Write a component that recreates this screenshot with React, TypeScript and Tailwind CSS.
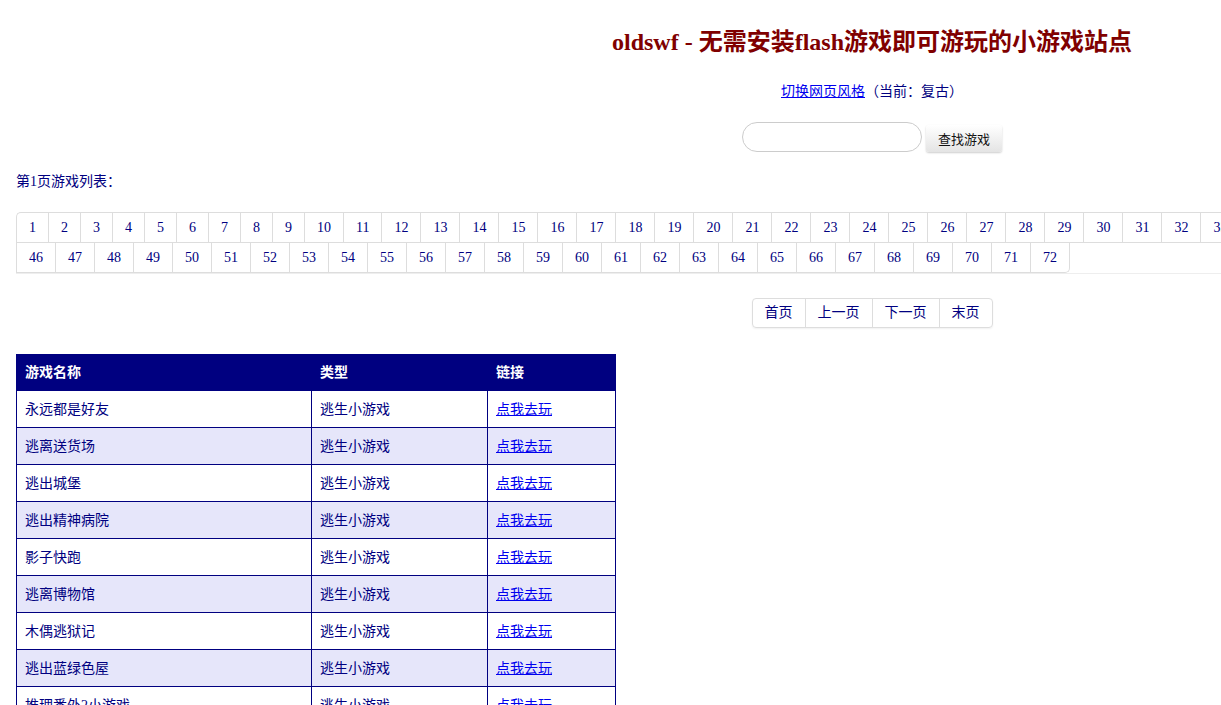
import React from 'react';

const games = [
  '永远都是好友',
  '逃离送货场',
  '逃出城堡',
  '逃出精神病院',
  '影子快跑',
  '逃离博物馆',
  '木偶逃狱记',
  '逃出蓝绿色屋',
  '推理番外2小游戏',
  '逃出密室',
];

const pages = Array.from({ length: 72 }, (_, i) => i + 1);

const App: React.FC = () => {
  return (
    <div
      className="w-full overflow-hidden bg-white text-[#000080] text-[14px]"
      style={{ fontFamily: '"Liberation Serif", "Noto Sans CJK SC", serif' }}
    >
      <div className="ml-4 w-[1712px] pb-10">
        {/* Header */}
        <h1 className="pt-[26px] text-center text-[24px] leading-8 font-bold text-[#800000]">
          oldswf - 无需安装flash游戏即可游玩的小游戏站点
        </h1>
        <p className="mt-[24px] text-center leading-5">
          <a href="#" className="text-[#0000ee] underline">切换网页风格</a>（当前：复古）
        </p>

        {/* Search */}
        <div className="mt-[20px] flex justify-center items-end gap-1">
          <input
            type="text"
            className="h-[30px] w-[180px] rounded-full border border-[#cccccc] bg-white px-3 outline-none"
          />
          <button
            className="h-[27px] w-[76px] rounded-[3px] bg-gradient-to-b from-white to-[#e4e4e4] text-[13px] text-[#111] shadow-[0_1px_2px_rgba(0,0,0,0.2)]"
            style={{ fontFamily: '"Noto Sans CJK SC", sans-serif' }}
          >
            查找游戏
          </button>
        </div>

        <p className="mt-[20px] leading-5">第1页游戏列表：</p>

        {/* Page numbers */}
        <div className="mt-[20px] border-b border-[#eeeeee]">
          <ul className="flex flex-wrap border-l border-t border-[#dddddd] rounded-tl-[5px]">
            {pages.map((p, i) => (
              <li
                key={p}
                className={`h-[30px] px-3 flex items-center justify-center border-r border-b border-[#dddddd] ${
                  i === pages.length - 1 ? 'rounded-br-[5px]' : ''
                }`}
              >
                <a href="#" className="text-[#000080]">{p}</a>
              </li>
            ))}
          </ul>
        </div>

        {/* Prev / next */}
        <div className="mt-[24px] flex justify-center">
          <div className="flex rounded-[4px] border border-[#dddddd] shadow-[0_1px_2px_rgba(0,0,0,0.06)]">
            {['首页', '上一页', '下一页', '末页'].map((t, i) => (
              <a
                key={t}
                href="#"
                className={`h-[28px] px-3 flex items-center leading-5 text-[#000080] ${
                  i > 0 ? 'border-l border-[#dddddd]' : ''
                }`}
              >
                {t}
              </a>
            ))}
          </div>
        </div>

        {/* Game table */}
        <table className="mt-[26px] w-[600px] border-collapse border border-[#000080]">
          <thead>
            <tr className="bg-[#000080] text-white">
              <th className="w-[295px] h-[36px] px-2 text-left font-bold border border-[#000080]">游戏名称</th>
              <th className="w-[176px] h-[36px] px-2 text-left font-bold border border-[#000080]">类型</th>
              <th className="h-[36px] px-2 text-left font-bold border border-[#000080]">链接</th>
            </tr>
          </thead>
          <tbody>
            {games.map((g, i) => (
              <tr key={g} className={i % 2 === 1 ? 'bg-[#e6e6fa]' : 'bg-white'}>
                <td className="h-[37px] px-2 border border-[#000080]">{g}</td>
                <td className="h-[37px] px-2 border border-[#000080]">逃生小游戏</td>
                <td className="h-[37px] px-2 border border-[#000080]">
                  <a href="#" className="text-[#0000ee] underline">点我去玩</a>
                </td>
              </tr>
            ))}
          </tbody>
        </table>
      </div>
    </div>
  );
};

export default App;
